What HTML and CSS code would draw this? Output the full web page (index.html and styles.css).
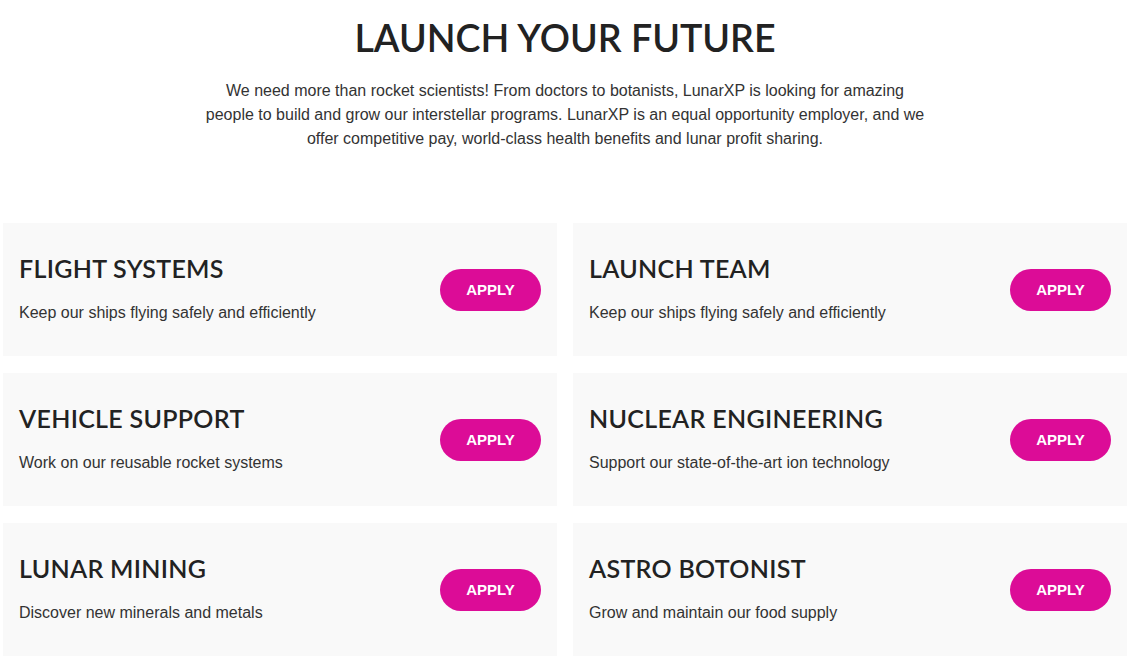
FILE: index.html
```html
<!DOCTYPE html>
<html lang="en">
<head>
<meta charset="utf-8">
<title>Launch Your Future</title>
<link rel="stylesheet" href="styles.css">
</head>
<body>
<main class="page">
<section class="intro">
  <h1 class="title">LAUNCH YOUR FUTURE</h1>
  <p class="lead">We need more than rocket scientists! From doctors to botanists, LunarXP is looking for amazing people to build and grow our interstellar programs. LunarXP is an equal opportunity employer, and we offer competitive pay, world-class health benefits and lunar profit sharing.</p>
</section>
<section class="jobs">
  <div class="card">
    <div class="info"><h3>FLIGHT SYSTEMS</h3><p>Keep our ships flying safely and efficiently</p></div>
    <a class="apply" href="#">APPLY</a>
  </div>
  <div class="card">
    <div class="info"><h3>LAUNCH TEAM</h3><p>Keep our ships flying safely and efficiently</p></div>
    <a class="apply" href="#">APPLY</a>
  </div>
  <div class="card">
    <div class="info"><h3>VEHICLE SUPPORT</h3><p>Work on our reusable rocket systems</p></div>
    <a class="apply" href="#">APPLY</a>
  </div>
  <div class="card">
    <div class="info"><h3>NUCLEAR ENGINEERING</h3><p>Support our state-of-the-art ion technology</p></div>
    <a class="apply" href="#">APPLY</a>
  </div>
  <div class="card">
    <div class="info"><h3>LUNAR MINING</h3><p>Discover new minerals and metals</p></div>
    <a class="apply" href="#">APPLY</a>
  </div>
  <div class="card">
    <div class="info"><h3>ASTRO BOTONIST</h3><p>Grow and maintain our food supply</p></div>
    <a class="apply" href="#">APPLY</a>
  </div>
</section>
</main>
</body>
</html>
```
FILE: styles.css
```css
* { box-sizing: border-box; }
html, body { margin: 0; padding: 0; background: #fff; }
body { font-family: "Liberation Sans", Arial, sans-serif; color: #333; }

.page { width: 1130px; }

.intro { text-align: center; padding-top: 15px; }
.title {
  margin: 0;
  font-family: Lato, "Open Sans", sans-serif;
  font-weight: 600;
  font-size: 37.6px;
  line-height: 46px;
  color: #222;
}
.lead {
  width: 730px;
  margin: 18px auto 0;
  font-size: 16px;
  line-height: 24px;
  color: #333;
}

.jobs {
  display: grid;
  grid-template-columns: 554px 554px;
  column-gap: 16px;
  row-gap: 17px;
  padding-left: 3px;
  margin-top: 72px;
}
.card {
  background: #f9f9f9;
  height: 133px;
  display: flex;
  align-items: center;
  justify-content: space-between;
  padding: 0 16px;
}
.info {
  margin-bottom: 4px;
}
.info h3 {
  margin: 0;
  font-family: Lato, "Open Sans", sans-serif;
  font-weight: 600;
  font-size: 25px;
  line-height: 30px;
  letter-spacing: 0.3px;
  color: #222;
}
.info p {
  margin: 20px 0 0;
  font-size: 16px;
  line-height: 20px;
  color: #333;
}
.apply {
  display: flex;
  align-items: center;
  justify-content: center;
  width: 101px;
  height: 42px;
  border-radius: 21px;
  background: #dc0c97;
  color: #fff;
  font-weight: bold;
  font-size: 15px;
  text-decoration: none;
}
```
